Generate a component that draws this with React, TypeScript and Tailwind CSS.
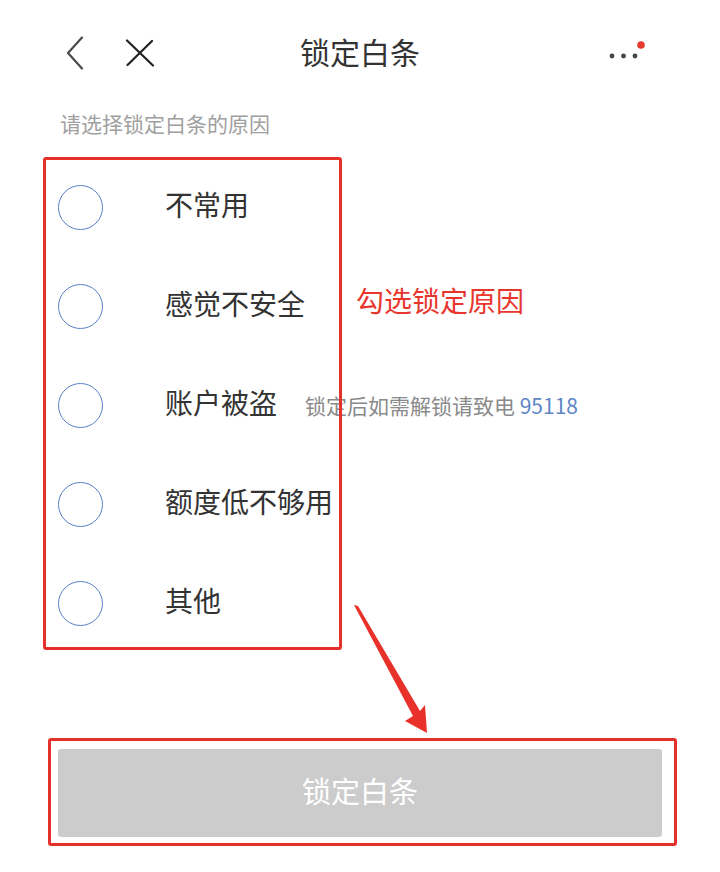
import React from 'react';

const reasons = ['不常用', '感觉不安全', '账户被盗', '额度低不够用', '其他'];

const BackIcon = () => (
  <svg width="18" height="34" viewBox="0 0 18 34" fill="none">
    <path d="M16 1.5 L2 17 L16 32.5" stroke="#4a4a4a" strokeWidth="2.2" strokeLinecap="round" strokeLinejoin="round" />
  </svg>
);

const CloseIcon = () => (
  <svg width="30" height="28" viewBox="0 0 30 28" fill="none">
    <path d="M2 1.5 L28 26.5 M27 2 L2.5 26" stroke="#222" strokeWidth="2.2" strokeLinecap="round" />
  </svg>
);

const MoreIcon = () => (
  <svg width="42" height="24" viewBox="0 0 42 24" fill="none">
    <circle cx="6" cy="16" r="2.4" fill="#444" />
    <circle cx="17.5" cy="16" r="2.4" fill="#444" />
    <circle cx="29" cy="16" r="2.4" fill="#444" />
    <circle cx="35" cy="5" r="3.8" fill="#e53b30" />
  </svg>
);

const Radio = () => (
  <div className="w-[45px] h-[45px] rounded-full border-[1.6px] border-[#5a80c8] shrink-0" />
);

const App: React.FC = () => {
  return (
    <div className="relative w-[720px] h-[872px] bg-white overflow-hidden font-[family-name:'Noto_Sans_CJK_SC','Noto_Sans',sans-serif]">
      {/* header */}
      <div className="flex items-center h-[106px]">
        <div className="w-[200px] flex items-center pl-[66px] gap-[41px]">
          <BackIcon />
          <CloseIcon />
        </div>
        <div className="flex-1 text-center text-[30px] leading-none text-[#333] -mt-[4px]">锁定白条</div>
        <div className="w-[200px] flex justify-end pr-[72px] -mt-[2px]">
          <MoreIcon />
        </div>
      </div>

      <div className="h-[40px] flex items-center pl-[60px] pb-[4px] text-[21px] text-[#a0a0a0]">
        请选择锁定白条的原因
      </div>

      {/* reasons */}
      <div className="mt-[21px] flex flex-col gap-[19px]">
        {reasons.map((r, i) => (
          <div key={r} className="h-[80px] flex items-center pl-[58px]">
            <Radio />
            <span className="ml-[62px] -mt-[6px] text-[28px] leading-none text-[#333]">{r}</span>
            {i === 2 && (
              <span className="ml-[28px] text-[21px] leading-none text-[#8a8a8a] whitespace-nowrap">
                锁定后如需解锁请致电 <span className="text-[#5d86c7]">95118</span>
              </span>
            )}
          </div>
        ))}
      </div>

      {/* button */}
      <div className="mt-[106px] mx-[58px]">
        <button className="w-full h-[88px] rounded-[3px] bg-[#cccccc] text-white text-[29px] leading-none pb-[6px]">
          锁定白条
        </button>
      </div>

      {/* annotations */}
      <div className="absolute left-[43px] top-[157px] w-[299px] h-[493px] border-[3px] border-[#e5312a] rounded-[3px] pointer-events-none" />
      <div className="absolute left-[356px] top-[284px] text-[28px] leading-[32px] text-[#e8362d] pointer-events-none">
        勾选锁定原因
      </div>
      <svg className="absolute left-0 top-0 pointer-events-none" width="720" height="872" viewBox="0 0 720 872">
        <polygon points="354,605 358,606 420,711 425,705 427,733 405,721 413,716" fill="#e8312a" />
      </svg>
      <div className="absolute left-[48px] top-[738px] w-[629px] h-[108px] border-[3px] border-[#e5312a] rounded-[3px] pointer-events-none" />
    </div>
  );
};

export default App;
